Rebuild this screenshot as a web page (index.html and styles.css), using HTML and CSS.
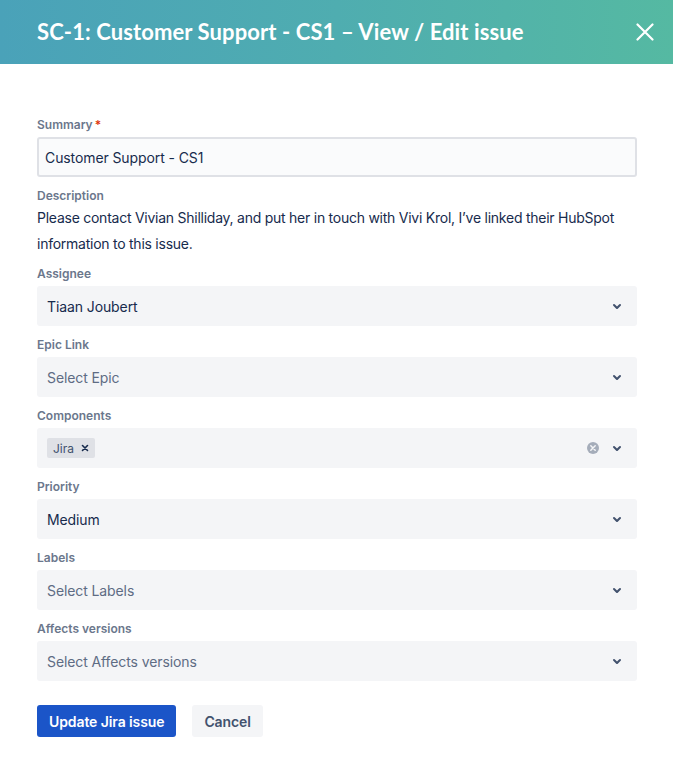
FILE: index.html
```html
<!DOCTYPE html>
<html>
<head>
<meta charset="utf-8">
<link rel="stylesheet" href="styles.css">
</head>
<body>
<div class="header">
  <div class="title">SC-1: Customer Support - CS1 – View / Edit issue</div>
  <svg class="close" width="18" height="18" viewBox="0 0 18 18"><path d="M1.5 1.5 L16.5 16.5 M16.5 1.5 L1.5 16.5" stroke="#fff" stroke-width="2.2" stroke-linecap="round"/></svg>
</div>
<form class="form">
  <div class="field">
    <div class="label">Summary<span class="req">*</span></div>
    <div class="input">Customer Support - CS1</div>
  </div>
  <div class="field desc">
    <div class="label">Description</div>
    <div class="desc-text">Please contact Vivian Shilliday, and put her in touch with Vivi Krol, I’ve linked their HubSpot information to this issue.</div>
  </div>
  <div class="field">
    <div class="label">Assignee</div>
    <div class="select"><span class="value">Tiaan Joubert</span><span class="ind"><svg width="24" height="24" viewBox="0 0 24 24"><path d="M8.292 10.293a1.009 1.009 0 000 1.419l2.939 2.965c.218.215.5.322.779.322s.556-.107.769-.322l2.93-2.955a1.01 1.01 0 000-1.419.987.987 0 00-1.406 0l-2.298 2.317-2.307-2.327a.99.99 0 00-1.406 0z" fill="#42526e"/></svg></span></div>
  </div>
  <div class="field">
    <div class="label">Epic Link</div>
    <div class="select"><span class="placeholder">Select Epic</span><span class="ind"><svg width="24" height="24" viewBox="0 0 24 24"><path d="M8.292 10.293a1.009 1.009 0 000 1.419l2.939 2.965c.218.215.5.322.779.322s.556-.107.769-.322l2.93-2.955a1.01 1.01 0 000-1.419.987.987 0 00-1.406 0l-2.298 2.317-2.307-2.327a.99.99 0 00-1.406 0z" fill="#42526e"/></svg></span></div>
  </div>
  <div class="field">
    <div class="label">Components</div>
    <div class="select">
      <span class="tags"><span class="tag">Jira<svg class="tag-x" width="8" height="8" viewBox="0 0 8 8"><path d="M1.5 1.5 L6.5 6.5 M6.5 1.5 L1.5 6.5" stroke="#172b4d" stroke-width="1.6" stroke-linecap="round"/></svg></span></span>
      <span class="clear"><svg width="14" height="14" viewBox="0 0 14 14"><circle cx="7" cy="7" r="6" fill="#a5adba"/><path d="M4.8 4.8 L9.2 9.2 M9.2 4.8 L4.8 9.2" stroke="#f4f5f7" stroke-width="1.5" stroke-linecap="round"/></svg></span>
      <span class="ind"><svg width="24" height="24" viewBox="0 0 24 24"><path d="M8.292 10.293a1.009 1.009 0 000 1.419l2.939 2.965c.218.215.5.322.779.322s.556-.107.769-.322l2.93-2.955a1.01 1.01 0 000-1.419.987.987 0 00-1.406 0l-2.298 2.317-2.307-2.327a.99.99 0 00-1.406 0z" fill="#42526e"/></svg></span>
    </div>
  </div>
  <div class="field">
    <div class="label">Priority</div>
    <div class="select"><span class="value">Medium</span><span class="ind"><svg width="24" height="24" viewBox="0 0 24 24"><path d="M8.292 10.293a1.009 1.009 0 000 1.419l2.939 2.965c.218.215.5.322.779.322s.556-.107.769-.322l2.93-2.955a1.01 1.01 0 000-1.419.987.987 0 00-1.406 0l-2.298 2.317-2.307-2.327a.99.99 0 00-1.406 0z" fill="#42526e"/></svg></span></div>
  </div>
  <div class="field">
    <div class="label">Labels</div>
    <div class="select"><span class="placeholder">Select Labels</span><span class="ind"><svg width="24" height="24" viewBox="0 0 24 24"><path d="M8.292 10.293a1.009 1.009 0 000 1.419l2.939 2.965c.218.215.5.322.779.322s.556-.107.769-.322l2.93-2.955a1.01 1.01 0 000-1.419.987.987 0 00-1.406 0l-2.298 2.317-2.307-2.327a.99.99 0 00-1.406 0z" fill="#42526e"/></svg></span></div>
  </div>
  <div class="field">
    <div class="label">Affects versions</div>
    <div class="select"><span class="placeholder">Select Affects versions</span><span class="ind"><svg width="24" height="24" viewBox="0 0 24 24"><path d="M8.292 10.293a1.009 1.009 0 000 1.419l2.939 2.965c.218.215.5.322.779.322s.556-.107.769-.322l2.93-2.955a1.01 1.01 0 000-1.419.987.987 0 00-1.406 0l-2.298 2.317-2.307-2.327a.99.99 0 00-1.406 0z" fill="#42526e"/></svg></span></div>
  </div>
  <div class="actions">
    <button type="button" class="btn primary">Update Jira issue</button>
    <button type="button" class="btn secondary">Cancel</button>
  </div>
</form>
</body>
</html>
```
FILE: styles.css
```css
* { box-sizing: border-box; }
html, body { margin: 0; padding: 0; background: #fff; }
body { font-family: Inter, "Noto Sans", "Liberation Sans", sans-serif; color: #172b4d; }

.header {
  height: 64px;
  display: flex;
  align-items: center;
  justify-content: space-between;
  padding: 0 19px 0 37px;
  background: linear-gradient(90deg, #4aa2b9 0%, #4fadb0 50%, #55b9a2 100%);
}
.title {
  color: #fff;
  font-family: Lato, "Noto Sans", sans-serif;
  font-weight: 700;
  font-size: 22px;
  letter-spacing: 0.1px;
  margin-top: -1px;
}
.close { display: block; }

.form {
  padding: 52px 36px 0 37px;
  display: flex;
  flex-direction: column;
}
.field {
  display: flex;
  flex-direction: column;
  gap: 4px;
  margin-bottom: 10px;
}
.label {
  font-size: 12px;
  line-height: 16px;
  padding-top: 1px;
  font-weight: 600;
  color: #6b778c;
}
.req { color: #de350b; margin-left: 2px; }

.input {
  height: 40px;
  border: 2px solid #dfe1e6;
  background: #fafbfc;
  border-radius: 3px;
  padding: 0 6px;
  display: flex;
  align-items: center;
  font-size: 14px;
  letter-spacing: -0.1px;
}

.desc { gap: 1px; margin-bottom: 8px; }
.desc-text {
  font-size: 14px;
  line-height: 26px;
  letter-spacing: -0.25px;
  color: #172b4d;
}

.select {
  height: 40px;
  background: #f4f5f7;
  border-radius: 3px;
  padding: 0 8px 0 10px;
  display: flex;
  align-items: center;
  font-size: 14px;
  letter-spacing: -0.1px;
}
.select .value { flex: 1; color: #172b4d; }
.select .placeholder { flex: 1; color: #5e6c84; }
.select .tags { flex: 1; display: flex; }
.ind { display: flex; width: 24px; height: 24px; }
.clear { display: flex; width: 14px; height: 14px; margin-right: 5px; }

.tag {
  display: inline-flex;
  align-items: center;
  height: 20px;
  background: #dfe1e6;
  border-radius: 2px;
  padding: 0 6px 0 6px;
  font-size: 12px;
  letter-spacing: 0;
  color: #42526e;
  gap: 7px;
}
.tag-x { display: block; }

.actions {
  display: flex;
  gap: 16px;
  margin-top: 14px;
}
.btn {
  height: 32px;
  border: none;
  border-radius: 3px;
  font-family: Inter, "Noto Sans", sans-serif;
  font-size: 14px;
  font-weight: 600;
  letter-spacing: -0.1px;
  padding: 0 12px;
}
.primary { background: #1b55c8; color: #fff; }
.secondary { background: #f4f5f7; color: #42526e; }
```
